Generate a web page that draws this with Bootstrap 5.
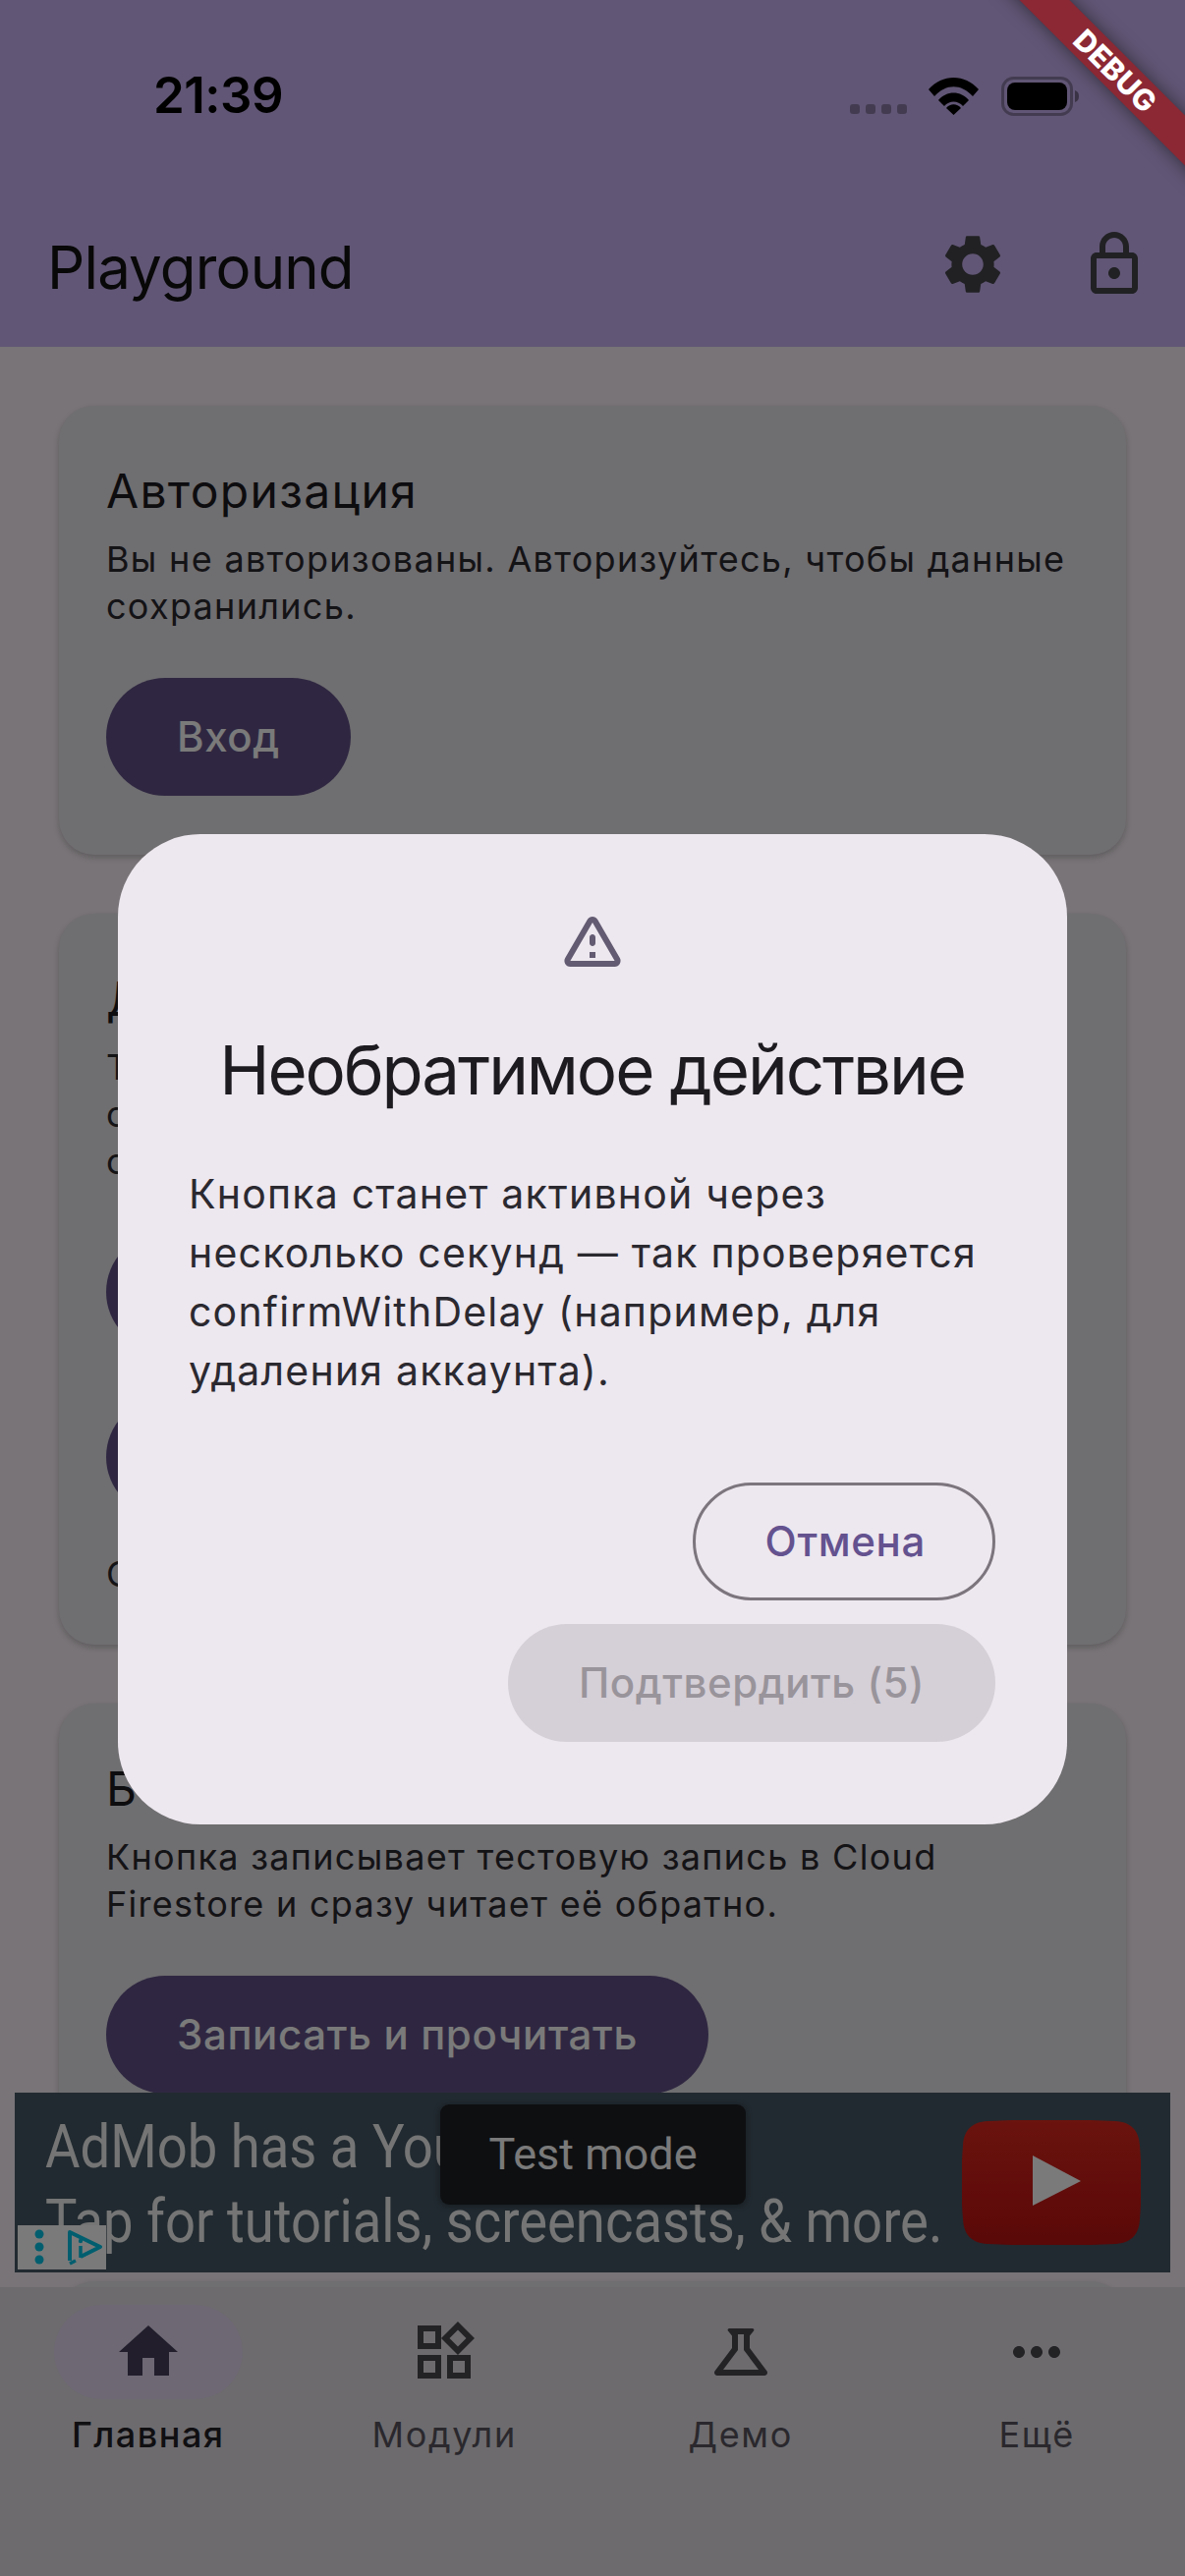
<!DOCTYPE html>
<html lang="ru">
<head>
<meta charset="utf-8">
<title>Playground</title>
<link href="https://cdn.jsdelivr.net/npm/bootstrap@5.3.0/dist/css/bootstrap.min.css" rel="stylesheet">
<style>
html,body{margin:0;padding:0;background:#faf2f8}
body{font-family:Inter,"Noto Sans",sans-serif;color:#1d1b20}
.screen{width:1206px;height:2622px;position:relative;overflow:hidden;background:#faf2f8}
.app-head{height:353px;background:#cab3f4;flex:none}
.status-row{height:185px;padding:67px 106px 0 156px;position:relative}
.clock{font-size:51px;font-weight:600;color:#000;line-height:60px;letter-spacing:-.5px}
.status-icons{position:absolute;left:865px;top:78px}
.bar-row{height:168px;padding:0 36px 0 48px}
.app-title{font-size:60px;line-height:72px;color:#111;font-weight:400;margin:5px 0 0;letter-spacing:-.85px}
.gap-icon{margin-left:72px}
.scroll-area{flex:1 1 auto;overflow:hidden;position:relative;padding-top:60px}
.info-card{margin:0 60px 60px;padding:48px;border:0;border-radius:36px;background:#e9e5eb;box-shadow:0 3px 6px rgba(0,0,0,.2)}
.card-head{font-size:48px;line-height:72px;font-weight:400;color:#1d1b20;letter-spacing:1.3px;margin:3px 0 9px}
.card-text{font-size:36px;line-height:48px;letter-spacing:1.3px;color:#2a282e;margin:0}
.pill-main{height:120px;padding:0 72px;border:0;border-radius:60px;background:#625389;color:#fff;font-size:42px;line-height:1;font-weight:500;letter-spacing:.63px;--bs-btn-hover-bg:#625389;--bs-btn-hover-color:#fff}
.stack-first{margin-top:49px}
.stack-next{margin-top:48px}
.line-after{margin-top:35px}
.tap-extra{margin-bottom:12px}
.ad-box{position:absolute;left:15px;top:1777px;width:1176px;height:183px;background:#455864;overflow:hidden;font-family:Roboto,sans-serif;color:#f5f5f5}
.ad-line{position:absolute;left:31px;font-size:54.4px;line-height:60px;white-space:nowrap;transform:scaleY(1.11);transform-origin:0 0}
.ad-a{top:23px}
.ad-b{top:99px}
.ad-play{position:absolute;left:964px;top:28px}
.ad-choice{position:absolute;left:3px;top:135px;width:90px;height:45px;background:#fff}
.test-tag{position:absolute;left:433px;top:12px;width:311px;height:102px;background:#1f2125;border-radius:9px;color:#fff;font-size:45px;box-shadow:0 1px 6px rgba(0,0,0,.35)}
.bottom-nav{height:294px;flex:none;background:#e3dfe5;padding-top:18px}
.nav-cell{width:25%;color:#58555e;font-size:36px;line-height:48px;font-weight:400;letter-spacing:1.7px}
.nav-cell.on{color:#232126;font-weight:500;letter-spacing:1.5px}
.nav-slot{width:192px;height:96px;border-radius:48px;margin-bottom:12px}
.nav-cell.on .nav-slot{background:#e3d9f0}
.veil{position:absolute;inset:0;background:rgba(0,0,0,.52)}
.sheet{position:absolute;left:120px;top:849px;width:966px;height:1008px;background:#ede7ef;border-radius:84px;padding:72px 73px 84px 72px}
.sheet-title{font-size:69px;line-height:96px;font-weight:400;color:#1d1b20;margin:48px 0;white-space:nowrap;letter-spacing:-2.1px}
.sheet-text{font-size:41px;line-height:60px;letter-spacing:1.2px;color:#2b2930;margin:0}
.sheet-actions{margin-top:84px;gap:24px}
.pill-line{height:120px;padding:0 68px 0 71px;border:3px solid #7c757e;border-radius:60px;background:transparent;color:#64528f;font-size:42px;font-weight:500;letter-spacing:.63px;line-height:1}
.pill-off{height:120px;padding:0 72px;border:0;border-radius:60px;background:#d5cfd7;color:#99949b;font-size:42px;font-weight:500;letter-spacing:.55px;line-height:1}
.pill-off:disabled{background:#d5cfd7;color:#99949b;opacity:1}
.debug-strip{position:absolute;left:935px;top:54px;width:400px;height:36px;transform:rotate(45deg);background:#8b2833;box-shadow:0 0 18px rgba(0,0,0,.5);color:#fff;font-family:Inter,sans-serif;font-weight:800;font-size:30px;line-height:36px;text-align:center}
</style>
</head>
<body>
<div class="screen d-flex flex-column">
  <header class="app-head">
    <div class="status-row">
      <div class="clock">21:39</div>
      <svg class="status-icons" width="236" height="40" viewBox="0 0 236 40" aria-hidden="true">
        <g fill="rgba(0,0,0,.3)"><rect x="0" y="28" width="10" height="10" rx="3"/><rect x="16" y="28" width="10" height="10" rx="3"/><rect x="32" y="28" width="10" height="10" rx="3"/><rect x="48" y="28" width="10" height="10" rx="3"/></g>
        <path d="M80 13C94 -3 117 -3 131 13L125 20C113 7 98 7 86 20Z M90 24C98 14 113 14 121 24L115 30C110 24 101 24 96 30Z M98 32C102 27 109 27 113 32L105.500 39Z" fill="#000"/>
        <rect x="155.500" y="1.500" width="70" height="37" rx="11" fill="none" stroke="rgba(0,0,0,.3)" stroke-width="3"/>
        <rect x="160" y="6" width="61" height="28" rx="8" fill="#000"/>
        <path d="M229 14c3 1 4 3 4 6s-1 5-4 6z" fill="rgba(0,0,0,.4)"/>
      </svg>
    </div>
    <div class="bar-row d-flex align-items-center justify-content-between">
      <h1 class="app-title">Playground</h1>
      <div class="d-flex align-items-center">
        <svg width="72" height="72" viewBox="0 0 24 24" fill="#46454c" aria-hidden="true"><path d="M19.14,12.94c0.04-0.3,0.06-0.61,0.06-0.94c0-0.32-0.02-0.64-0.07-0.94l2.03-1.58c0.18-0.14,0.23-0.41,0.12-0.61 l-1.92-3.32c-0.12-0.22-0.37-0.29-0.59-0.22l-2.39,0.96c-0.5-0.38-1.03-0.7-1.62-0.94L14.4,2.81c-0.04-0.24-0.24-0.41-0.48-0.41 h-3.84c-0.24,0-0.43,0.17-0.47,0.41L9.25,5.35C8.66,5.59,8.12,5.92,7.63,6.29L5.24,5.33c-0.22-0.08-0.47,0-0.59,0.22L2.74,8.87 C2.62,9.08,2.66,9.34,2.86,9.48l2.03,1.58C4.84,11.36,4.8,11.69,4.8,12s0.02,0.64,0.07,0.94l-2.03,1.58 c-0.18,0.14-0.23,0.41-0.12,0.61l1.92,3.32c0.12,0.22,0.37,0.29,0.59,0.22l2.39-0.96c0.5,0.38,1.03,0.7,1.62,0.94l0.36,2.54 c0.05,0.24,0.24,0.41,0.48,0.41h3.84c0.24,0,0.44-0.17,0.47-0.41l0.36-2.54c0.59-0.24,1.13-0.56,1.62-0.94l2.39,0.96 c0.22,0.08,0.47,0,0.59-0.22l1.92-3.32c0.12-0.22,0.07-0.47-0.12-0.61L19.14,12.94z M12,15.6c-1.98,0-3.6-1.62-3.6-3.6 s1.62-3.6,3.6-3.6s3.6,1.62,3.6,3.6S13.98,15.6,12,15.6z"/></svg>
        <svg class="gap-icon" width="72" height="72" viewBox="0 0 24 24" fill="#46454c" aria-hidden="true"><path d="M18 8h-1V6c0-2.760-2.240-5-5-5S7 3.240 7 6v2H6c-1.100 0-2 .9-2 2v10c0 1.100.9 2 2 2h12c1.100 0 2-.9 2-2V10c0-1.100-.9-2-2-2zM9 6c0-1.660 1.340-3 3-3s3 1.340 3 3v2H9V6zm9 14H6V10h12v10zm-6-3c1.100 0 2-.9 2-2s-.9-2-2-2-2 .9-2 2 .9 2 2 2z"/></svg>
      </div>
    </div>
  </header>

  <main class="scroll-area">
    <section class="card info-card">
      <h2 class="card-head">Авторизация</h2>
      <p class="card-text">Вы не авторизованы. Авторизуйтесь, чтобы данные сохранились.</p>
      <div class="stack-first tap-extra"><button type="button" class="btn pill-main">Вход</button></div>
    </section>
    <section class="card info-card">
      <h2 class="card-head">Диалоги</h2>
      <p class="card-text">Тест</p>
      <p class="card-text">с</p>
      <p class="card-text">с</p>
      <div class="stack-first"><button type="button" class="btn pill-main">&nbsp;</button></div>
      <div class="stack-next"><button type="button" class="btn pill-main">&nbsp;</button></div>
      <p class="card-text line-after">С</p>
    </section>
    <section class="card info-card">
      <h2 class="card-head">Б</h2>
      <p class="card-text">Кнопка записывает тестовую запись в Cloud Firestore и сразу читает её обратно.</p>
      <div class="stack-first"><button type="button" class="btn pill-main">Записать и прочитать</button></div>
      <p class="card-text line-after">&nbsp;</p>
    </section>
    <section class="card info-card"><p class="card-text">&nbsp;</p></section>

    <aside class="ad-box">
      <div class="ad-line ad-a">AdMob has a YouTube</div>
      <div class="ad-line ad-b">Tap for tutorials, screencasts, &amp; more.</div>
      <svg class="ad-play" width="182" height="127" viewBox="0 0 182 127" aria-hidden="true">
        <defs><linearGradient id="ytred" x1="0" y1="0" x2="0" y2="1"><stop offset="0" stop-color="#df2a1f"/><stop offset="1" stop-color="#bc1111"/></linearGradient></defs>
        <path d="M26 1C60 -1 122 -1 156 1C172 2 180 10 181 26C183 50 183 77 181 101C180 117 172 125 156 126C122 128 60 128 26 126C10 125 2 117 1 101C-1 77 -1 50 1 26C2 10 10 2 26 1Z" fill="url(#ytred)"/>
        <path d="M72 36L121 62L72 87Z" fill="#fff"/>
      </svg>
      <div class="test-tag d-flex align-items-center justify-content-center">Test mode</div>
      <div class="ad-choice">
        <svg width="90" height="45" viewBox="0 0 90 45" aria-hidden="true">
          <circle cx="22" cy="9" r="4.500" fill="#00c4e6"/><circle cx="22" cy="22" r="4.500" fill="#00c4e6"/><circle cx="22" cy="35" r="4.500" fill="#00c4e6"/>
          <path d="M53 36V7L84 22L64 32" fill="none" stroke="#00c4e6" stroke-width="4" stroke-linejoin="round"/>
          <path d="M53 39L59 36" stroke="#00c4e6" stroke-width="3.500"/>
          <path d="M64 21v12" stroke="#00c4e6" stroke-width="3.500"/><circle cx="64" cy="16" r="2.200" fill="#00c4e6"/>
        </svg>
      </div>
    </aside>
  </main>

  <nav class="bottom-nav d-flex">
    <div class="nav-cell on d-flex flex-column align-items-center">
      <div class="nav-slot d-flex align-items-center justify-content-center">
        <svg width="72" height="72" viewBox="0 0 24 24" fill="#473f5c" aria-hidden="true"><path d="M10 20v-6h4v6h5v-8h3L12 3 2 12h3v8z"/></svg>
      </div>
      <span>Главная</span>
    </div>
    <div class="nav-cell d-flex flex-column align-items-center">
      <div class="nav-slot d-flex align-items-center justify-content-center">
        <svg width="72" height="72" viewBox="0 0 24 24" fill="#49474f" aria-hidden="true"><path d="M16.660 4.520l2.830 2.830-2.830 2.830-2.830-2.830 2.830-2.830M9 5v4H5V5h4m10 10v4h-4v-4h4M9 15v4H5v-4h4m7.660-13.310L11 7.340 16.660 13l5.660-5.660-5.660-5.650zM11 3H3v8h8V3zm10 10h-8v8h8v-8zm-10 0H3v8h8v-8z"/></svg>
      </div>
      <span>Модули</span>
    </div>
    <div class="nav-cell d-flex flex-column align-items-center">
      <div class="nav-slot d-flex align-items-center justify-content-center">
        <svg width="72" height="72" viewBox="0 0 24 24" fill="#49474f" aria-hidden="true"><path d="M13 11.330L18 18H6l5-6.670V6h2M15.960 4H8.040c-.42 0-.65.48-.39.81L9 6.500v4.170L3.200 18.400c-.49.66-.02 1.600.8 1.600h16c.82 0 1.290-.94.8-1.600L15 10.670V6.500l1.350-1.690c.26-.33.03-.81-.39-.81z"/></svg>
      </div>
      <span>Демо</span>
    </div>
    <div class="nav-cell d-flex flex-column align-items-center">
      <div class="nav-slot d-flex align-items-center justify-content-center">
        <svg width="72" height="72" viewBox="0 0 24 24" fill="#49474f" aria-hidden="true"><path d="M6 10c-1.100 0-2 .9-2 2s.9 2 2 2 2-.9 2-2-.9-2-2-2zm12 0c-1.100 0-2 .9-2 2s.9 2 2 2 2-.9 2-2-.9-2-2-2zm-6 0c-1.100 0-2 .9-2 2s.9 2 2 2 2-.9 2-2-.9-2-2-2z"/></svg>
      </div>
      <span>Ещё</span>
    </div>
  </nav>

  <div class="veil"></div>

  <div class="sheet d-flex flex-column" role="dialog" aria-modal="true">
    <div class="d-flex justify-content-center">
      <svg width="72" height="72" viewBox="0 0 24 24" fill="#625b71" aria-hidden="true"><path d="M12 5.990 19.530 19H4.470L12 5.990M2.740 18c-.77 1.330.19 3 1.730 3h15.060c1.540 0 2.500-1.670 1.730-3L13.730 4.990c-.77-1.330-2.690-1.330-3.460 0L2.740 18zM11 11v2c0 .55.45 1 1 1s1-.45 1-1v-2c0-.55-.45-1-1-1s-1 .45-1 1zm0 5h2v2h-2z"/></svg>
    </div>
    <h2 class="sheet-title text-center">Необратимое действие</h2>
    <p class="sheet-text">Кнопка станет активной через несколько секунд — так проверяется confirmWithDelay (например, для удаления аккаунта).</p>
    <div class="sheet-actions d-flex flex-column align-items-end">
      <button type="button" class="btn pill-line">Отмена</button>
      <button type="button" class="btn pill-off" disabled>Подтвердить (5)</button>
    </div>
  </div>

  <div class="debug-strip">DEBUG</div>
</div>
<script src="https://cdn.jsdelivr.net/npm/bootstrap@5.3.0/dist/js/bootstrap.bundle.min.js"></script>
</body>
</html>
